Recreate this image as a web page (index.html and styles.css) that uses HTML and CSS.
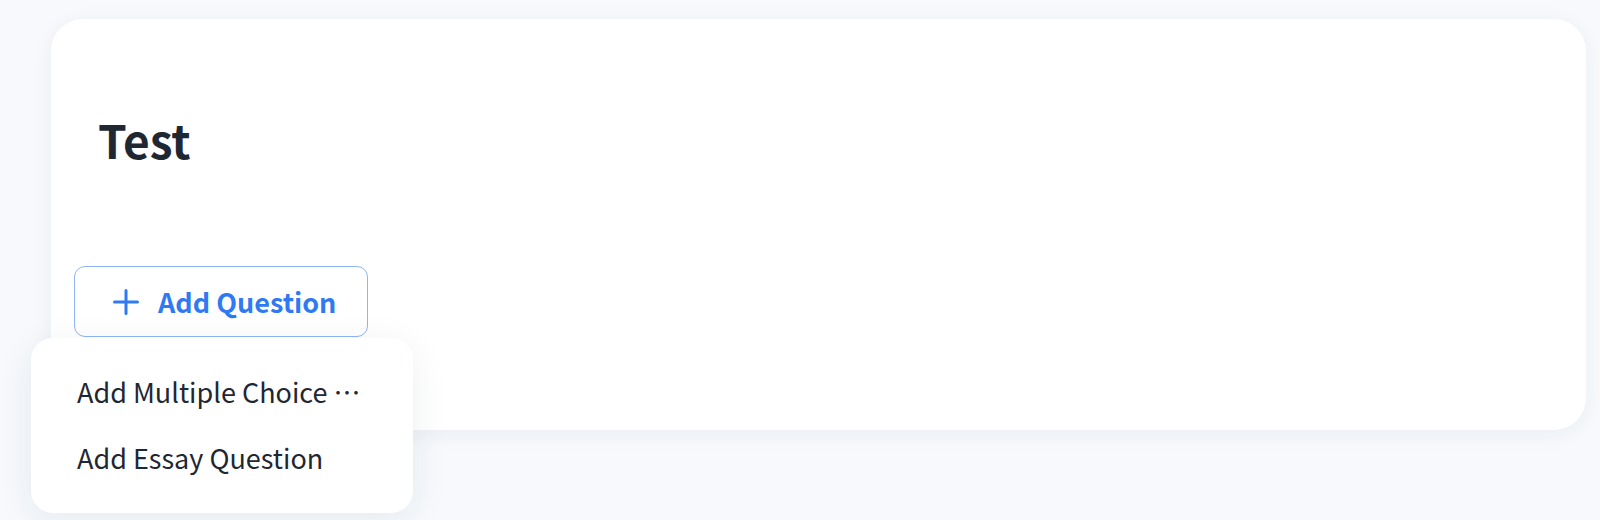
FILE: index.html
```html
<!DOCTYPE html>
<html lang="en">
<head>
    <meta charset="UTF-8">
    <meta name="viewport" content="width=device-width, initial-scale=1.0">
    <title>Test</title>
    <link rel="stylesheet" href="styles.css">
</head>
<body>
    <main class="page">
        <section class="card">
            <h1 class="title">Test</h1>

            <div class="add-wrap">
                <button class="add-btn" type="button">
                    <svg class="plus" width="26" height="26" viewBox="0 0 26 26" aria-hidden="true">
                        <path d="M13 1.5v23M1.5 13h23" stroke="currentColor" stroke-width="3" stroke-linecap="round" fill="none"/>
                    </svg>
                    <span>Add Question</span>
                </button>

                <ul class="menu">
                    <li class="menu-item">Add Multiple Choice Question</li>
                    <li class="menu-item">Add Essay Question</li>
                </ul>
            </div>
        </section>
    </main>
</body>
</html>
```

FILE: styles.css
```css
html, body {
    height: 100%;
}
body {
    margin: 0;
    padding: 0;
    background-color: #f7f9fc;
    font-family: "Noto Sans CJK SC", "Source Sans Pro", "Lato", sans-serif;
    color: #1f2733;
}
.page {
    box-sizing: border-box;
    min-height: 100%;
    padding: 19px 14px 0 51px;
}
.card {
    background-color: #ffffff;
    height: 411px;
    box-sizing: border-box;
    border-radius: 32px;
    box-shadow: 0 4px 22px rgba(30, 45, 80, 0.06);
    padding: 90px 23px 0 23px;
}
.title {
    margin: 0 0 0 24px;
    font-size: 46px;
    font-weight: 700;
    line-height: 60px;
    color: #1f2733;
}
.add-wrap {
    position: relative;
    margin-top: 97px;
    width: max-content;
}
.add-btn {
    display: flex;
    align-items: center;
    gap: 19px;
    box-sizing: border-box;
    height: 71px;
    padding: 0 31px 0 38px;
    background-color: #ffffff;
    border: 1.5px solid #8fb5f7;
    border-radius: 11px;
    color: #2f7af3;
    font-family: inherit;
    font-size: 27px;
    font-weight: 700;
    cursor: pointer;
}
.plus {
    display: block;
}
.menu {
    position: absolute;
    z-index: 2;
    left: -43px;
    top: 72px;
    width: 382px;
    height: 175px;
    box-sizing: border-box;
    margin: 0;
    padding: 21px 0 0 0;
    list-style: none;
    background-color: #ffffff;
    border-radius: 22px;
    box-shadow: 0 8px 36px rgba(30, 45, 80, 0.08);
}
.menu-item {
    padding: 0 44px 0 46px;
    height: 66px;
    line-height: 66px;
    font-size: 27px;
    white-space: nowrap;
    overflow: hidden;
    text-overflow: ellipsis;
    color: #1f2733;
    cursor: pointer;
}
```
